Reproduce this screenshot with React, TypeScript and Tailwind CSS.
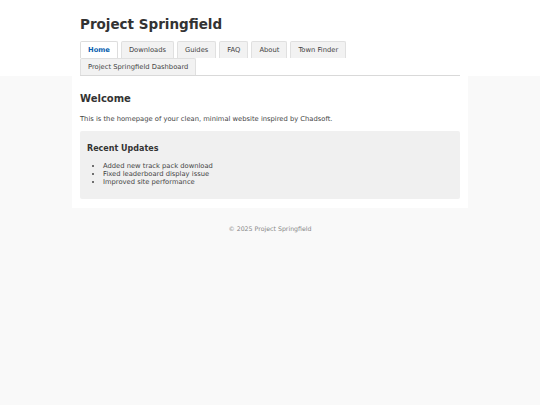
import clsx from 'clsx';

const tabs = [
  { label: 'Home', active: true },
  { label: 'Downloads' },
  { label: 'Guides' },
  { label: 'FAQ' },
  { label: 'About' },
  { label: 'Town Finder' },
  { label: 'Project Springfield Dashboard' },
];

const updates = [
  'Added new track pack download',
  'Fixed leaderboard display issue',
  'Improved site performance',
];

export default function App() {
  return (
    <div className="min-h-screen bg-[#f9f9f9] font-['DejaVu_Sans',sans-serif] text-[#444]">
      {/* Header */}
      <header className="bg-white">
        <div className="mx-auto w-[380px] pt-[14px]">
          <h1 className="text-[13.5px] font-bold leading-[20px] text-[#333]">Project Springfield</h1>
          <nav className="mt-[7px] flex flex-wrap gap-x-[3px] border-b border-[#d9d9d9]">
            {tabs.map((tab) => (
              <a
                key={tab.label}
                href="#"
                className={clsx(
                  'h-[17px] rounded-t-[2px] border border-b-0 px-[7px] text-[6.75px] leading-[16px]',
                  tab.active
                    ? 'border-[#ddd] bg-white font-bold text-[#0b5fb0]'
                    : 'border-[#e0e0e0] bg-[#f2f2f2] text-[#444]',
                )}
              >
                {tab.label}
              </a>
            ))}
          </nav>
        </div>
      </header>

      {/* Main card */}
      <main className="mx-auto w-[396px] bg-white px-[8px] pt-[17px] pb-[9px]">
        <h2 className="text-[10px] font-bold leading-[12px] text-[#333]">Welcome</h2>
        <p className="mt-[9.5px] text-[6.75px] leading-[9px]">
          This is the homepage of your clean, minimal website inspired by Chadsoft.
        </p>

        <section className="mt-[7.5px] rounded-[2px] bg-[#f0f0f0] px-[7px] pt-[13px] pb-[13px]">
          <h3 className="text-[8px] font-bold leading-[10px] text-[#333]">Recent Updates</h3>
          <ul className="mt-[8px] list-disc pl-[16px] text-[6.75px] leading-[8px] text-[#444]">
            {updates.map((u) => (
              <li key={u}>{u}</li>
            ))}
          </ul>
        </section>
      </main>

      {/* Footer */}
      <footer className="mt-[17px] text-center text-[6.25px] leading-[8px] text-[#888]">
        © 2025 Project Springfield
      </footer>
    </div>
  );
}
